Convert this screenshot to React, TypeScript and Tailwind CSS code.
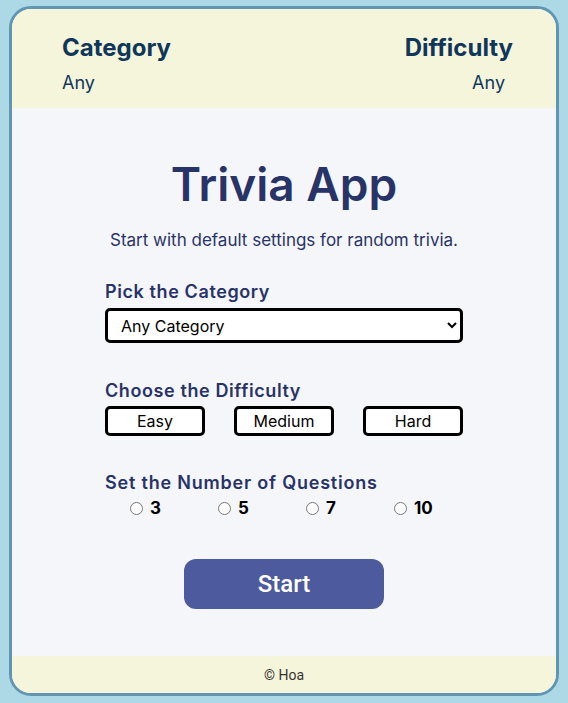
import { useState } from 'react';

export default function App() {
  const [difficulty, setDifficulty] = useState('');
  const [amount, setAmount] = useState('');

  return (
    <div className="min-h-[703px] bg-[#add8e6] px-[9px] pt-[6px] pb-[7px]">
      <div className="flex h-[690px] flex-col overflow-hidden rounded-[22px] border-[3px] border-[#6196b3] bg-[#f5f6fa]">
        <header className="flex h-[99px] items-start justify-between bg-[#f5f5dc] pr-[43px] pl-[50px] pt-[23px] font-['Inter',sans-serif] text-[#10375a]">
          <div>
            <div className="text-[24px] leading-[32px] font-bold">Category</div>
            <div className="mt-[6px] text-[18px] leading-[26px]">Any</div>
          </div>
          <div className="flex flex-col items-end">
            <div className="text-[24px] leading-[32px] font-bold">Difficulty</div>
            <div className="mt-[6px] mr-[8px] text-[18px] leading-[26px]">Any</div>
          </div>
        </header>

        <main className="flex flex-1 flex-col items-center px-[93px] font-['Inter',sans-serif] text-[#283368]">
          <h1 className="mt-[46px] text-[46px] leading-[60px] font-semibold">Trivia App</h1>
          <p className="mt-[14px] text-[17px] leading-[24px]">Start with default settings for random trivia.</p>

          <div className="mt-[27px] w-full">
            <label className="block text-[18px] leading-[26px] font-semibold tracking-[0.6px]">Pick the Category</label>
            <select className="mt-[3px] h-[35px] w-full rounded-[5px] border-[3px] border-black bg-white px-[9px] font-['Inter',sans-serif] text-[16px] text-black">
              <option>Any Category</option>
            </select>
          </div>

          <div className="mt-[35px] w-full">
            <div className="text-[18px] leading-[26px] font-semibold tracking-[0.6px]">Choose the Difficulty</div>
            <div className="mt-[2px] flex justify-between">
              {['Easy', 'Medium', 'Hard'].map((d) => (
                <button
                  key={d}
                  onClick={() => setDifficulty(d)}
                  className={`h-[30px] w-[100px] rounded-[5px] border-[3px] border-black text-[16px] text-black ${difficulty === d ? 'bg-[#dfe3f5]' : 'bg-white'}`}
                >
                  {d}
                </button>
              ))}
            </div>
          </div>

          <div className="mt-[34px] w-full">
            <div className="text-[18px] leading-[26px] font-semibold tracking-[0.8px]">Set the Number of Questions</div>
            <div className="-mt-[1px] flex pl-[25px] text-black">
              {['3', '5', '7', '10'].map((n) => (
                <label key={n} className="flex w-[88px] shrink-0 items-center gap-[7px] text-[17px] leading-[26px] font-bold">
                  <input
                    type="radio"
                    name="amount"
                    checked={amount === n}
                    onChange={() => setAmount(n)}
                    className="m-0 h-[13px] w-[13px]"
                  />
                  {n}
                </label>
              ))}
            </div>
          </div>

          <button className="mt-[38px] h-[50px] w-[200px] rounded-[12px] bg-[#4d5a9d] font-['Roboto',sans-serif] text-[24px] font-medium text-white">
            Start
          </button>
        </main>

        <footer className="flex h-[37px] items-center justify-center bg-[#f5f5dc] pt-[1px] font-['Roboto',sans-serif] text-[14px] text-[#333]">
          © Hoa
        </footer>
      </div>
    </div>
  );
}
